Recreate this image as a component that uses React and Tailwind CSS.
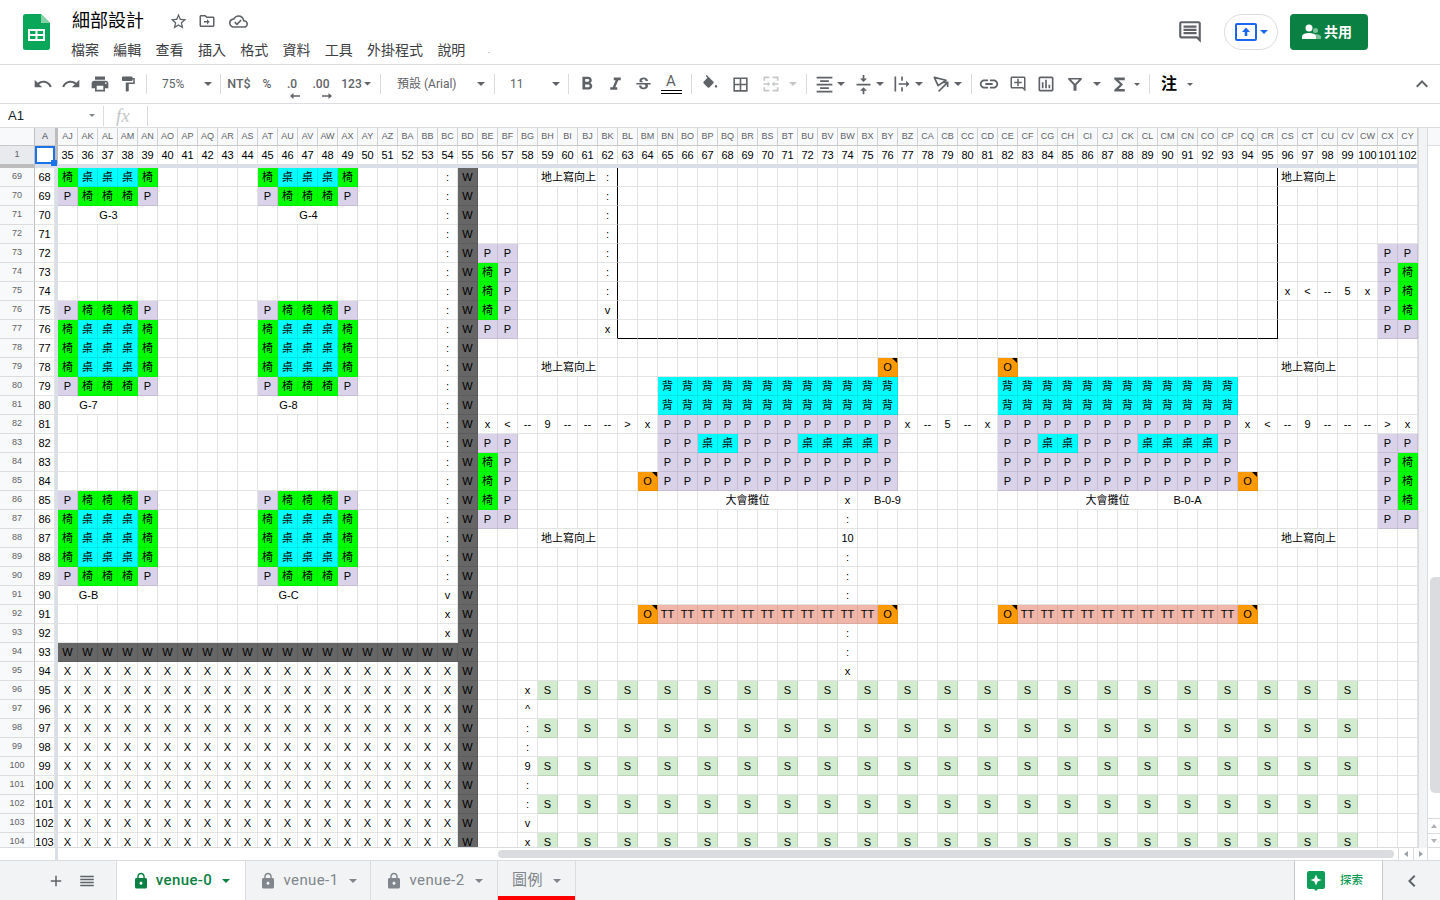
import React from "react";
import {
  MdUndo, MdRedo, MdPrint, MdFormatPaint, MdFormatBold, MdFormatItalic, MdStrikethroughS,
  MdBorderAll, MdFormatAlignCenter, MdVerticalAlignCenter, MdLink, MdOutlineAddComment,
  MdOutlineInsertChart, MdFunctions, MdExpandLess, MdLock, MdAdd, MdReorder, MdStarBorder,
  MdOutlineCloudDone, MdOutlineComment, MdChevronLeft,
} from "react-icons/md";

const SANS = "[font-family:'Liberation_Sans','Noto_Sans_CJK_TC',sans-serif]";
const UI = "[font-family:Roboto,'Noto_Sans_CJK_TC',sans-serif]";

function colName(i) {
  let s = "";
  while (i > 0) {
    const m = (i - 1) % 26;
    s = String.fromCharCode(65 + m) + s;
    i = Math.floor((i - 1) / 26);
  }
  return s;
}

const COLS = Array.from({ length: 68 }, (_, i) => 35 + i);
const ROWS = Array.from({ length: 36 }, (_, i) => 68 + i);

const data = {};
function s(r, c, t, k = "plain", span = 1) {
  if (!data[r]) data[r] = {};
  data[r][c] = { t, k, span };
}
function rng(r, a, b, t, k) {
  for (let c = a; c <= b; c++) s(r, c, t, k);
}
function desk(r, b) {
  s(r, b, "椅", "green");
  rng(r, b + 1, b + 3, "桌", "cyan");
  s(r, b + 4, "椅", "green");
}
function chair(r, b) {
  s(r, b, "P", "lav");
  rng(r, b + 1, b + 3, "椅", "green");
  s(r, b + 4, "P", "lav");
}
[35, 45].forEach((b) => {
  desk(68, b);
  chair(69, b);
  chair(75, b);
  [76, 77, 78].forEach((r) => desk(r, b));
  chair(79, b);
  chair(85, b);
  [86, 87, 88].forEach((r) => desk(r, b));
  chair(89, b);
});
s(70, 36, "G-3", "label", 3);
s(70, 46, "G-4", "label", 3);
s(80, 35, "G-7", "label", 3);
s(80, 45, "G-8", "label", 3);
s(90, 35, "G-B", "label", 3);
s(90, 45, "G-C", "label", 3);

for (let r = 68; r <= 89; r++) s(r, 54, ":");
s(90, 54, "v");
s(91, 54, "x");
s(92, 54, "x");
rng(93, 35, 54, "W", "dark");
for (let r = 94; r <= 103; r++) rng(r, 35, 54, "X");
for (let r = 68; r <= 103; r++) s(r, 55, "W", "dark");

for (let r = 68; r <= 74; r++) s(r, 62, ":");
s(75, 62, "v");
s(76, 62, "x");

[[72, "P"], [73, "椅"], [74, "椅"], [75, "椅"], [76, "P"]].forEach(([r, t]) => {
  s(r, 56, t, t === "P" ? "lav" : "green");
  s(r, 57, "P", "lav");
  s(r, 101, "P", "lav");
  s(r, 102, t === "P" ? "P" : "椅", t === "P" ? "lav" : "green");
});
[[82, "P"], [83, "椅"], [84, "椅"], [85, "椅"], [86, "P"]].forEach(([r, t]) => {
  s(r, 56, t, t === "P" ? "lav" : "green");
  s(r, 57, "P", "lav");
  s(r, 101, "P", "lav");
  s(r, 102, t === "P" ? "P" : "椅", t === "P" ? "lav" : "green");
});

[[96, "x"], [97, "<"], [98, "--"], [99, "5"], [100, "x"]].forEach(([c, t]) => s(74, c, t));

[78, 87].forEach((r) => {
  s(r, 59, "地上寫向上", "left", 3);
  s(r, 96, "地上寫向上", "left", 3);
});
s(68, 59, "地上寫向上", "left", 3);
s(68, 96, "地上寫向上", "left", 3);

s(78, 76, "O", "orange");
s(78, 82, "O", "orange");
[79, 80].forEach((r) => {
  rng(r, 65, 76, "背", "cyan");
  rng(r, 82, 93, "背", "cyan");
});
[[56, "x"], [57, "<"], [58, "--"], [59, "9"], [60, "--"], [61, "--"], [62, "--"], [63, ">"], [64, "x"],
 [77, "x"], [78, "--"], [79, "5"], [80, "--"], [81, "x"],
 [94, "x"], [95, "<"], [96, "--"], [97, "9"], [98, "--"], [99, "--"], [100, "--"], [101, ">"], [102, "x"]
].forEach(([c, t]) => s(81, c, t));
rng(81, 65, 76, "P", "lav");
rng(81, 82, 93, "P", "lav");

[65, 82].forEach((b) => {
  rng(82, b, b + 11, "P", "lav");
  rng(82, b + 2, b + 3, "桌", "cyan");
  rng(82, b + 7, b + 10, "桌", "cyan");
  rng(83, b, b + 11, "P", "lav");
  rng(84, b, b + 11, "P", "lav");
});
s(84, 64, "O", "orange");
s(84, 94, "O", "orange");

s(85, 67, "大會攤位", "plain", 5);
s(85, 74, "x");
s(85, 75, "B-0-9", "plain", 3);
s(85, 85, "大會攤位", "plain", 5);
s(85, 90, "B-0-A", "plain", 3);
s(86, 74, ":");
s(87, 74, "10");
[88, 89, 90, 92, 93].forEach((r) => s(r, 74, ":"));
s(94, 74, "x");

s(91, 64, "O", "orange");
rng(91, 65, 75, "TT", "pink");
s(91, 76, "O", "orange");
s(91, 82, "O", "orange");
rng(91, 83, 93, "TT", "pink");
s(91, 94, "O", "orange");

[[95, "x"], [96, "^"], [97, ":"], [98, ":"], [99, "9"], [100, ":"], [101, ":"], [102, "v"], [103, "x"]].forEach(([r, t]) => s(r, 58, t));
[95, 97, 99, 101, 103].forEach((r) => {
  for (let c = 59; c <= 99; c += 2) s(r, c, "S", "green2");
});

const KIND = {
  plain: "",
  left: "",
  label: "pl-[2px]",
  green: "bg-[#00ff00] border-[#00ee00]",
  cyan: "bg-[#00ffff] border-[#00e4e4]",
  lav: "bg-[#d9d2e9] border-[#c4bdd3]",
  dark: "bg-[#666666] border-[#5c5c5c]",
  green2: "bg-[#d3ebcf] border-[#b9d5b6]",
  pink: "bg-[#f0b6aa] border-[#dba89d]",
  orange: "bg-[#ff9900] border-[#ea8d00]",
};
const SPAN = { 1: "", 3: "col-span-3", 5: "col-span-5" };

function Cell({ row, col, cell }) {
  const span = cell ? cell.span : 1;
  const last = col + span - 1;
  const kind = cell ? cell.k : "plain";
  const colored = kind !== "plain" && kind !== "left" && kind !== "label";
  const blackR = row <= 76 && (last === 62 || last === 95);
  const blackB = row === 76 && col >= 63 && col <= 95;
  const r = blackR ? "border-r-black" : colored ? "" : "border-r-[#e2e3e3]";
  const b = blackB ? "border-b-black" : colored ? "" : "border-b-[#e2e3e3]";
  return (
    <div
      className={`relative flex items-center overflow-visible whitespace-nowrap border-r border-b text-[11px] leading-none text-black ${
        kind === "left" ? "justify-start pl-[3px]" : "justify-center"
      } ${KIND[kind]} ${SPAN[span]} ${r} ${b}`}
    >
      {cell ? cell.t : null}
      {kind === "orange" ? (
        <span className="absolute right-0 top-0 h-0 w-0 border-l-[5px] border-t-[5px] border-l-transparent border-t-black" />
      ) : null}
    </div>
  );
}

function SheetRow({ row }) {
  const rowData = data[row] || {};
  const out = [];
  for (let c = 35; c <= 102; ) {
    const cell = rowData[c];
    out.push(<Cell key={c} row={row} col={c} cell={cell} />);
    c += cell ? cell.span : 1;
  }
  return (
    <div className="flex h-[19px] shrink-0">
      <div className="flex w-[35px] shrink-0 items-center justify-center border-r border-b border-r-[#c0c0c0] border-b-[#dcdcdc] bg-[#f8f9fa] text-[9px] text-[#5f6368]">
        {row + 1}
      </div>
      <div className="flex w-[20px] shrink-0 items-center justify-center border-r border-b border-[#e2e3e3] text-[11px] text-black">
        {row}
      </div>
      <div className="w-[3px] shrink-0 bg-[#dadfe7]" />
      <div className="grid grid-cols-[repeat(68,20px)] grid-rows-[19px]">{out}</div>
    </div>
  );
}

function Caret({ color = "#5f6368", w = 8 }) {
  return (
    <svg width={w} height={w / 2} viewBox="0 0 8 4">
      <path d="M0 0h8L4 4z" fill={color} />
    </svg>
  );
}
function Sep({ ml = "" }) {
  return <div className={`h-[20px] w-px shrink-0 bg-[#dadce0] ${ml}`} />;
}
const ic = "#5f6368";

function Sheets() {
  return (
    <svg width="27" height="36" viewBox="0 0 27 36">
      <path d="M2.500 0H18l9 9v24.500a2.500 2.500 0 0 1-2.500 2.500h-22A2.500 2.500 0 0 1 0 33.500v-31A2.500 2.500 0 0 1 2.500 0z" fill="#0aa75a" />
      <path d="M18 0l9 9h-9z" fill="#86d2a6" />
      <path d="M5 15h17v12H5z" fill="#fff" />
      <path d="M7 17h5.500v3H7zM14.500 17H20v3h-5.500zM7 22h5.500v3H7zM14.500 22H20v3h-5.500z" fill="#0aa75a" />
    </svg>
  );
}
function FolderMove() {
  return (
    <svg width="18" height="18" viewBox="0 0 24 24">
      <path d="M20 6h-8l-2-2H4c-1.100 0-2 .9-2 2v12c0 1.100.9 2 2 2h16c1.100 0 2-.9 2-2V8c0-1.100-.9-2-2-2zm0 12H4V6h5.170l2 2H20v10z" fill={ic} />
      <path d="M12 9.500l3.500 3.500-3.500 3.500V14H8v-2h4z" fill={ic} />
    </svg>
  );
}
function Fill() {
  return (
    <svg width="18" height="18" viewBox="0 0 24 24">
      <path d="M16.560 8.940L7.620 0 6.210 1.410l2.380 2.380-5.150 5.150c-.59.59-.59 1.540 0 2.120l5.500 5.500c.29.29.68.44 1.060.44s.77-.15 1.060-.44l5.500-5.500c.59-.58.59-1.530 0-2.120z" fill={ic} />
      <path d="M20 12.500s-1.600 1.800-1.600 2.900c0 .9.7 1.600 1.600 1.600s1.600-.7 1.600-1.600c0-1.100-1.600-2.900-1.600-2.900z" fill={ic} />
    </svg>
  );
}
function Merge() {
  return (
    <svg width="20" height="20" viewBox="0 0 24 24">
      <path d="M3 3h7v2H5v3H3zM14 3h7v5h-2V5h-5zM3 16h2v3h5v2H3zM14 19h5v-3h2v5h-7zM3 11h5V9l3 3-3 3v-2H3zM21 11h-5V9l-3 3 3 3v-2h5z" fill="#c4c7c9" />
    </svg>
  );
}
function Wrap() {
  return (
    <svg width="20" height="20" viewBox="0 0 24 24">
      <path d="M3 3h2v18H3zM11 3h2v5h-2zM11 16h2v5h-2zM8 11h9V8l4 4-4 4v-3H8z" fill={ic} />
    </svg>
  );
}
function Rotate() {
  return (
    <svg width="20" height="20" viewBox="0 0 24 24" fill="none">
      <path d="M4 4l14 3.500-9.500 6.500z" stroke={ic} strokeWidth="2" strokeLinejoin="round" />
      <path d="M9 21l11-11M14.500 10H20v5.500" stroke={ic} strokeWidth="2" />
    </svg>
  );
}
function Filter() {
  return (
    <svg width="18" height="18" viewBox="0 0 24 24">
      <path d="M3 4h18v2l-7 7.200V21h-4v-7.800L3 6zM6.500 6l5.500 5.600L17.500 6z" fill={ic} fillRule="evenodd" />
    </svg>
  );
}
function ArrowBelow({ right }) {
  return (
    <svg width="10" height="6" viewBox="0 0 10 6">
      {right ? <path d="M0 2.300h6.500V0L10 3 6.500 6V3.700H0z" fill={ic} /> : <path d="M10 2.300H3.500V0L0 3l3.500 3V3.700H10z" fill={ic} />}
    </svg>
  );
}
function Person() {
  return (
    <svg width="19" height="16" viewBox="0 0 19 16">
      <circle cx="13.500" cy="6.500" r="2.500" fill="#7cc29b" />
      <path d="M11 10.500c3-.8 8-.3 8 2.500v2h-6c0-2-.5-3.500-2-4.500z" fill="#7cc29b" />
      <circle cx="7" cy="4" r="3.500" fill="#fff" />
      <path d="M0 15v-2.500C0 10 4 9 7 9s7 1 7 3.500V15z" fill="#fff" />
    </svg>
  );
}

function T({ children, cls = "w-[28px]" }) {
  return <div className={`flex h-full shrink-0 items-center justify-center ${cls}`}>{children}</div>;
}

function Tab({ name, active, wCls, red }) {
  const col = active ? "text-[#0b8043]" : "text-[#80868b]";
  return (
    <div className={`relative flex h-full shrink-0 items-center justify-center gap-[6px] border-r border-[#dadce0] ${wCls} ${active ? "bg-white" : ""}`}>
      {red ? null : <MdLock size={18} className={col} />}
      <span className={`text-[15px] tracking-[0.4px] ${active ? "font-medium" : ""} ${col}`}>{name}</span>
      <span className="ml-[4px]">
        <Caret color={active ? "#0b8043" : "#80868b"} />
      </span>
      {red ? <div className="absolute bottom-0 left-0 right-0 h-[4px] bg-[#ff0000]" /> : null}
    </div>
  );
}

export default function App() {
  const menus = ["檔案", "編輯", "查看", "插入", "格式", "資料", "工具", "外掛程式", "說明"];
  return (
    <div className={`flex h-[900px] w-[1440px] flex-col overflow-hidden bg-white ${SANS}`}>
      {/* title bar */}
      <div className={`flex h-[65px] shrink-0 border-b border-[#dadce0] ${UI}`}>
        <div className="ml-[23px] mt-[14px] shrink-0">
          <Sheets />
        </div>
        <div className="ml-[22px] flex flex-col">
          <div className="mt-[9px] flex h-[24px] items-center">
            <span className="text-[18px] leading-none text-black">細部設計</span>
            <span className="ml-[25px] flex items-center gap-[10px] text-[#5f6368]">
              <MdStarBorder size={19} />
              <FolderMove />
              <MdOutlineCloudDone size={19} className="ml-[3px]" />
            </span>
          </div>
          <div className="-ml-px mt-[7px] flex items-center gap-[14.300px] text-[14px] leading-[20px] text-[#3c4043]">
            {menus.map((m) => (
              <span key={m}>{m}</span>
            ))}
            <span className="ml-[8px] text-[10px] text-[#9aa0a6]">.</span>
          </div>
        </div>
        <div className="ml-auto mr-[72px] flex items-start pt-[14px]">
          <div className="mr-[21px] mt-[5px] text-[#5f6368]">
            <MdOutlineComment size={26} />
          </div>
          <div className="flex h-[36px] w-[54px] items-center justify-center gap-[3px] rounded-full border border-[#dadce0]">
            <div className="flex h-[18px] w-[22px] items-center justify-center rounded-[2px] border-2 border-[#1a66f0]">
              <svg width="10" height="10" viewBox="0 0 10 10">
                <path d="M5 0.500L9 5H6.300v4H3.700V5H1z" fill="#1a66f0" />
              </svg>
            </div>
            <Caret color="#1a66f0" />
          </div>
          <div className="ml-[12px] flex h-[36px] w-[78px] items-center justify-center gap-[3px] rounded-[4px] bg-[#0b8043] pr-[4px] text-[14px] font-bold text-white">
            <Person />
            <span>共用</span>
          </div>
        </div>
      </div>

      {/* toolbar */}
      <div className={`flex h-[39px] shrink-0 items-center border-b border-[#dadce0] pl-[29px] text-[12px] text-[#5f6368] ${UI}`}>
        <T><MdUndo size={20} className="text-[#5f6368]" /></T>
        <T><MdRedo size={20} className="text-[#5f6368]" /></T>
        <T cls="ml-px w-[28px]"><MdPrint size={20} className="text-[#5f6368]" /></T>
        <T><MdFormatPaint size={18} className="text-[#5f6368]" /></T>
        <Sep ml="ml-[4px]" />
        <div className="flex h-full w-[73px] shrink-0 items-center justify-between pl-[15px] pr-[8px]">
          <span>75%</span>
          <Caret />
        </div>
        <Sep />
        <T cls="w-[36px]"><span className="text-[12.500px] font-medium">NT$</span></T>
        <T cls="w-[20px]"><span className="font-medium">%</span></T>
        <T cls="ml-px w-[28px]">
          <span className="relative font-medium">
            .0
            <span className="absolute -bottom-[6px] left-[3px] flex"><ArrowBelow /></span>
          </span>
        </T>
        <T cls="w-[30px]">
          <span className="relative font-medium">
            .00
            <span className="absolute -bottom-[6px] left-[9px] flex"><ArrowBelow right /></span>
          </span>
        </T>
        <T cls="w-[40px] gap-[2px]"><span className="font-medium">123</span><Caret w={7} /></T>
        <Sep ml="ml-[4px]" />
        <div className="flex h-full w-[113px] shrink-0 items-center justify-between pl-[16px] pr-[9px]">
          <span>預設 (Arial)</span>
          <Caret />
        </div>
        <Sep />
        <div className="flex h-full w-[73px] shrink-0 items-center justify-between pl-[15px] pr-[8px]">
          <span>11</span>
          <Caret />
        </div>
        <Sep />
        <T cls="ml-[4px] w-[28px]"><MdFormatBold size={22} className="text-[#5f6368]" /></T>
        <T><MdFormatItalic size={21} className="text-[#5f6368]" /></T>
        <T><MdStrikethroughS size={19} className="text-[#5f6368]" /></T>
        <T>
          <span className="flex flex-col items-center">
            <span className="text-[15px] leading-[15px]">A</span>
            <span className="mt-[1px] h-[4px] w-[21px] border-y border-black" />
          </span>
        </T>
        <Sep ml="ml-[6px]" />
        <T cls="ml-[4px] w-[28px]"><Fill /></T>
        <T cls="ml-[2px] w-[28px]"><MdBorderAll size={19} className="text-[#5f6368]" /></T>
        <T cls="ml-[3px] w-[28px]"><Merge /></T>
        <T cls="ml-[2px] w-[12px]"><Caret color="#c4c7c9" /></T>
        <Sep ml="ml-[7px]" />
        <T cls="ml-[5px] w-[24px]"><MdFormatAlignCenter size={21} className="text-[#5f6368]" /></T>
        <T cls="w-[10px]"><Caret /></T>
        <T cls="ml-[5px] w-[24px]"><MdVerticalAlignCenter size={21} className="text-[#5f6368]" /></T>
        <T cls="w-[10px]"><Caret /></T>
        <T cls="ml-[5px] w-[24px]"><Wrap /></T>
        <T cls="w-[10px]"><Caret /></T>
        <T cls="ml-[5px] w-[24px]"><Rotate /></T>
        <T cls="w-[10px]"><Caret /></T>
        <Sep ml="ml-[8px]" />
        <T cls="ml-[3px] w-[28px]"><MdLink size={22} className="text-[#5f6368]" /></T>
        <T cls="ml-px w-[28px]"><MdOutlineAddComment size={18} className="text-[#5f6368]" /></T>
        <T><MdOutlineInsertChart size={20} className="text-[#5f6368]" /></T>
        <T cls="ml-px w-[28px]"><Filter /></T>
        <T cls="ml-[3px] w-[10px]"><Caret /></T>
        <T cls="ml-[5px] w-[24px]"><MdFunctions size={21} className="text-[#5f6368]" /></T>
        <T cls="ml-px w-[10px]"><Caret w={6} /></T>
        <Sep ml="ml-[7px]" />
        <T cls="ml-[7px] w-[24px]"><span className="text-[16px] font-bold text-black">注</span></T>
        <T cls="ml-[4px] w-[10px]"><Caret w={6} /></T>
        <T cls="ml-auto mr-[6px] w-[24px]"><MdExpandLess size={24} className="text-[#5f6368]" /></T>
      </div>

      {/* formula bar */}
      <div className="flex h-[24px] shrink-0 items-center border-b border-[#dadce0]">
        <div className="flex h-full w-[103px] items-center justify-between pl-[8px] pr-[8px] text-[13px] text-[#202124]">
          <span>A1</span>
          <Caret w={6} color="#80868b" />
        </div>
        <Sep />
        <span className="ml-[12px] w-[31px] [font-family:'Liberation_Serif',serif] text-[19px] italic leading-none text-[#c4c7c9]">fx</span>
        <Sep />
      </div>

      {/* sheet */}
      <div className="flex h-[720px] shrink-0">
        <div className="flex w-[1418px] shrink-0 flex-col">
          <div className="flex h-[18px] shrink-0 border-b border-[#c8c8c8] text-[9px] leading-none text-[#5f6368]">
            <div className="w-[35px] shrink-0 border-r border-[#c0c0c0] bg-[#f8f9fa]" />
            <div className="flex w-[20px] shrink-0 items-center justify-center bg-[#e8eaed] text-[#3c4043]">A</div>
            <div className="w-[3px] shrink-0 bg-[#bdbdbd]" />
            {COLS.map((c) => (
              <div key={c} className="flex w-[20px] shrink-0 items-center justify-center border-r border-[#d0d0d0] bg-[#f8f9fa]">
                {colName(c + 1)}
              </div>
            ))}
          </div>
          <div className="flex h-[18px] shrink-0 text-[11px] text-black">
            <div className="flex w-[35px] shrink-0 items-center justify-center border-r border-[#c0c0c0] bg-[#e8eaed] text-[9px] text-[#5f6368]">1</div>
            <div className="relative w-[20px] shrink-0 border-2 border-[#1a73e8]">
              <div className="absolute -bottom-[4px] -right-[4px] h-[6px] w-[6px] bg-[#1a73e8]" />
            </div>
            <div className="w-[3px] shrink-0 bg-[#bdbdbd]" />
            {COLS.map((c) => (
              <div key={c} className="flex w-[20px] shrink-0 items-center justify-center whitespace-nowrap border-r border-[#e2e3e3]">
                {c}
              </div>
            ))}
          </div>
          <div className="flex h-[4px] shrink-0">
            <div className="w-[35px] shrink-0 bg-[#bdbdbd]" />
            <div className="flex-1 bg-[#dadfe7]" />
          </div>
          <div className="flex h-[680px] shrink-0 flex-col overflow-hidden border-b border-[#dadce0]">
            {ROWS.map((r) => (
              <SheetRow key={r} row={r} />
            ))}
          </div>
        </div>
        <div className="w-[10px] shrink-0 border-x border-[#dadce0] bg-[#f1f3f4]" />
        <div className="flex w-[12px] shrink-0 flex-col">
          <div className="h-[18px] border-b border-[#dadce0] bg-[#f8f9fa]" />
          <div className="ml-[2px] mt-[431px] h-[216px] w-[10px] rounded-l-[5px] bg-[#dadce0]" />
          <div className="mt-auto flex h-[15px] items-center justify-center border-t border-[#dadce0]">
            <svg width="6" height="4" viewBox="0 0 6 4"><path d="M3 0l3 4H0z" fill="#b0b3b8" /></svg>
          </div>
          <div className="flex h-[15px] items-center justify-center border-t border-b border-[#dadce0]">
            <svg width="6" height="4" viewBox="0 0 6 4"><path d="M0 0h6L3 4z" fill="#b0b3b8" /></svg>
          </div>
        </div>
      </div>

      {/* horizontal scrollbar */}
      <div className="flex h-[13px] shrink-0 items-center border-b border-[#dadce0]">
        <div className="ml-[55px] h-full w-[3px] bg-[#dadfe7]" />
        <div className="ml-[440px] h-[8px] w-[896px] rounded-[4px] bg-[#dadce0]" />
        <div className="ml-[4px] flex h-full w-[15px] items-center justify-center border-l border-[#dadce0]">
          <svg width="4" height="6" viewBox="0 0 4 6"><path d="M4 0v6L0 3z" fill="#9aa0a6" /></svg>
        </div>
        <div className="flex h-full w-[15px] items-center justify-center border-l border-r border-[#dadce0]">
          <svg width="4" height="6" viewBox="0 0 4 6"><path d="M0 0v6l4-3z" fill="#9aa0a6" /></svg>
        </div>
      </div>

      {/* tab bar */}
      <div className={`flex h-[39px] shrink-0 items-center bg-[#f1f3f4] ${UI}`}>
        <div className="flex h-full w-[117px] shrink-0 items-center border-r border-[#dadce0] pl-[47px]">
          <MdAdd size={18} className="text-[#5f6368]" />
          <MdReorder size={18} className="ml-[13px] text-[#5f6368]" />
        </div>
        <Tab name="venue-0" active wCls="w-[129px]" />
        <Tab name="venue-1" wCls="w-[125px]" />
        <Tab name="venue-2" wCls="w-[127px]" />
        <Tab name="圖例" red wCls="w-[78px]" />
        <div className="ml-auto flex h-full w-[89px] items-center border-x border-[#c6c8ca] bg-white">
          <svg className="ml-[12px]" width="20" height="20" viewBox="0 0 20 20">
            <path d="M2 0h14a2 2 0 0 1 2 2v14a2 2 0 0 1-2 2h-5l-2 2-2-2H2a2 2 0 0 1-2-2V2a2 2 0 0 1 2-2z" fill="#0f9d58" />
            <path d="M9 3.500l1.600 3.900L14.500 9l-3.900 1.600L9 14.500l-1.600-3.900L3.500 9l3.900-1.600z" fill="#fff" />
          </svg>
          <span className="ml-[13px] text-[11.500px] font-medium text-[#0f9d58]">探索</span>
        </div>
        <div className="flex h-full w-[57px] items-center justify-center">
          <MdChevronLeft size={24} className="text-[#5f6368]" />
        </div>
      </div>
    </div>
  );
}
